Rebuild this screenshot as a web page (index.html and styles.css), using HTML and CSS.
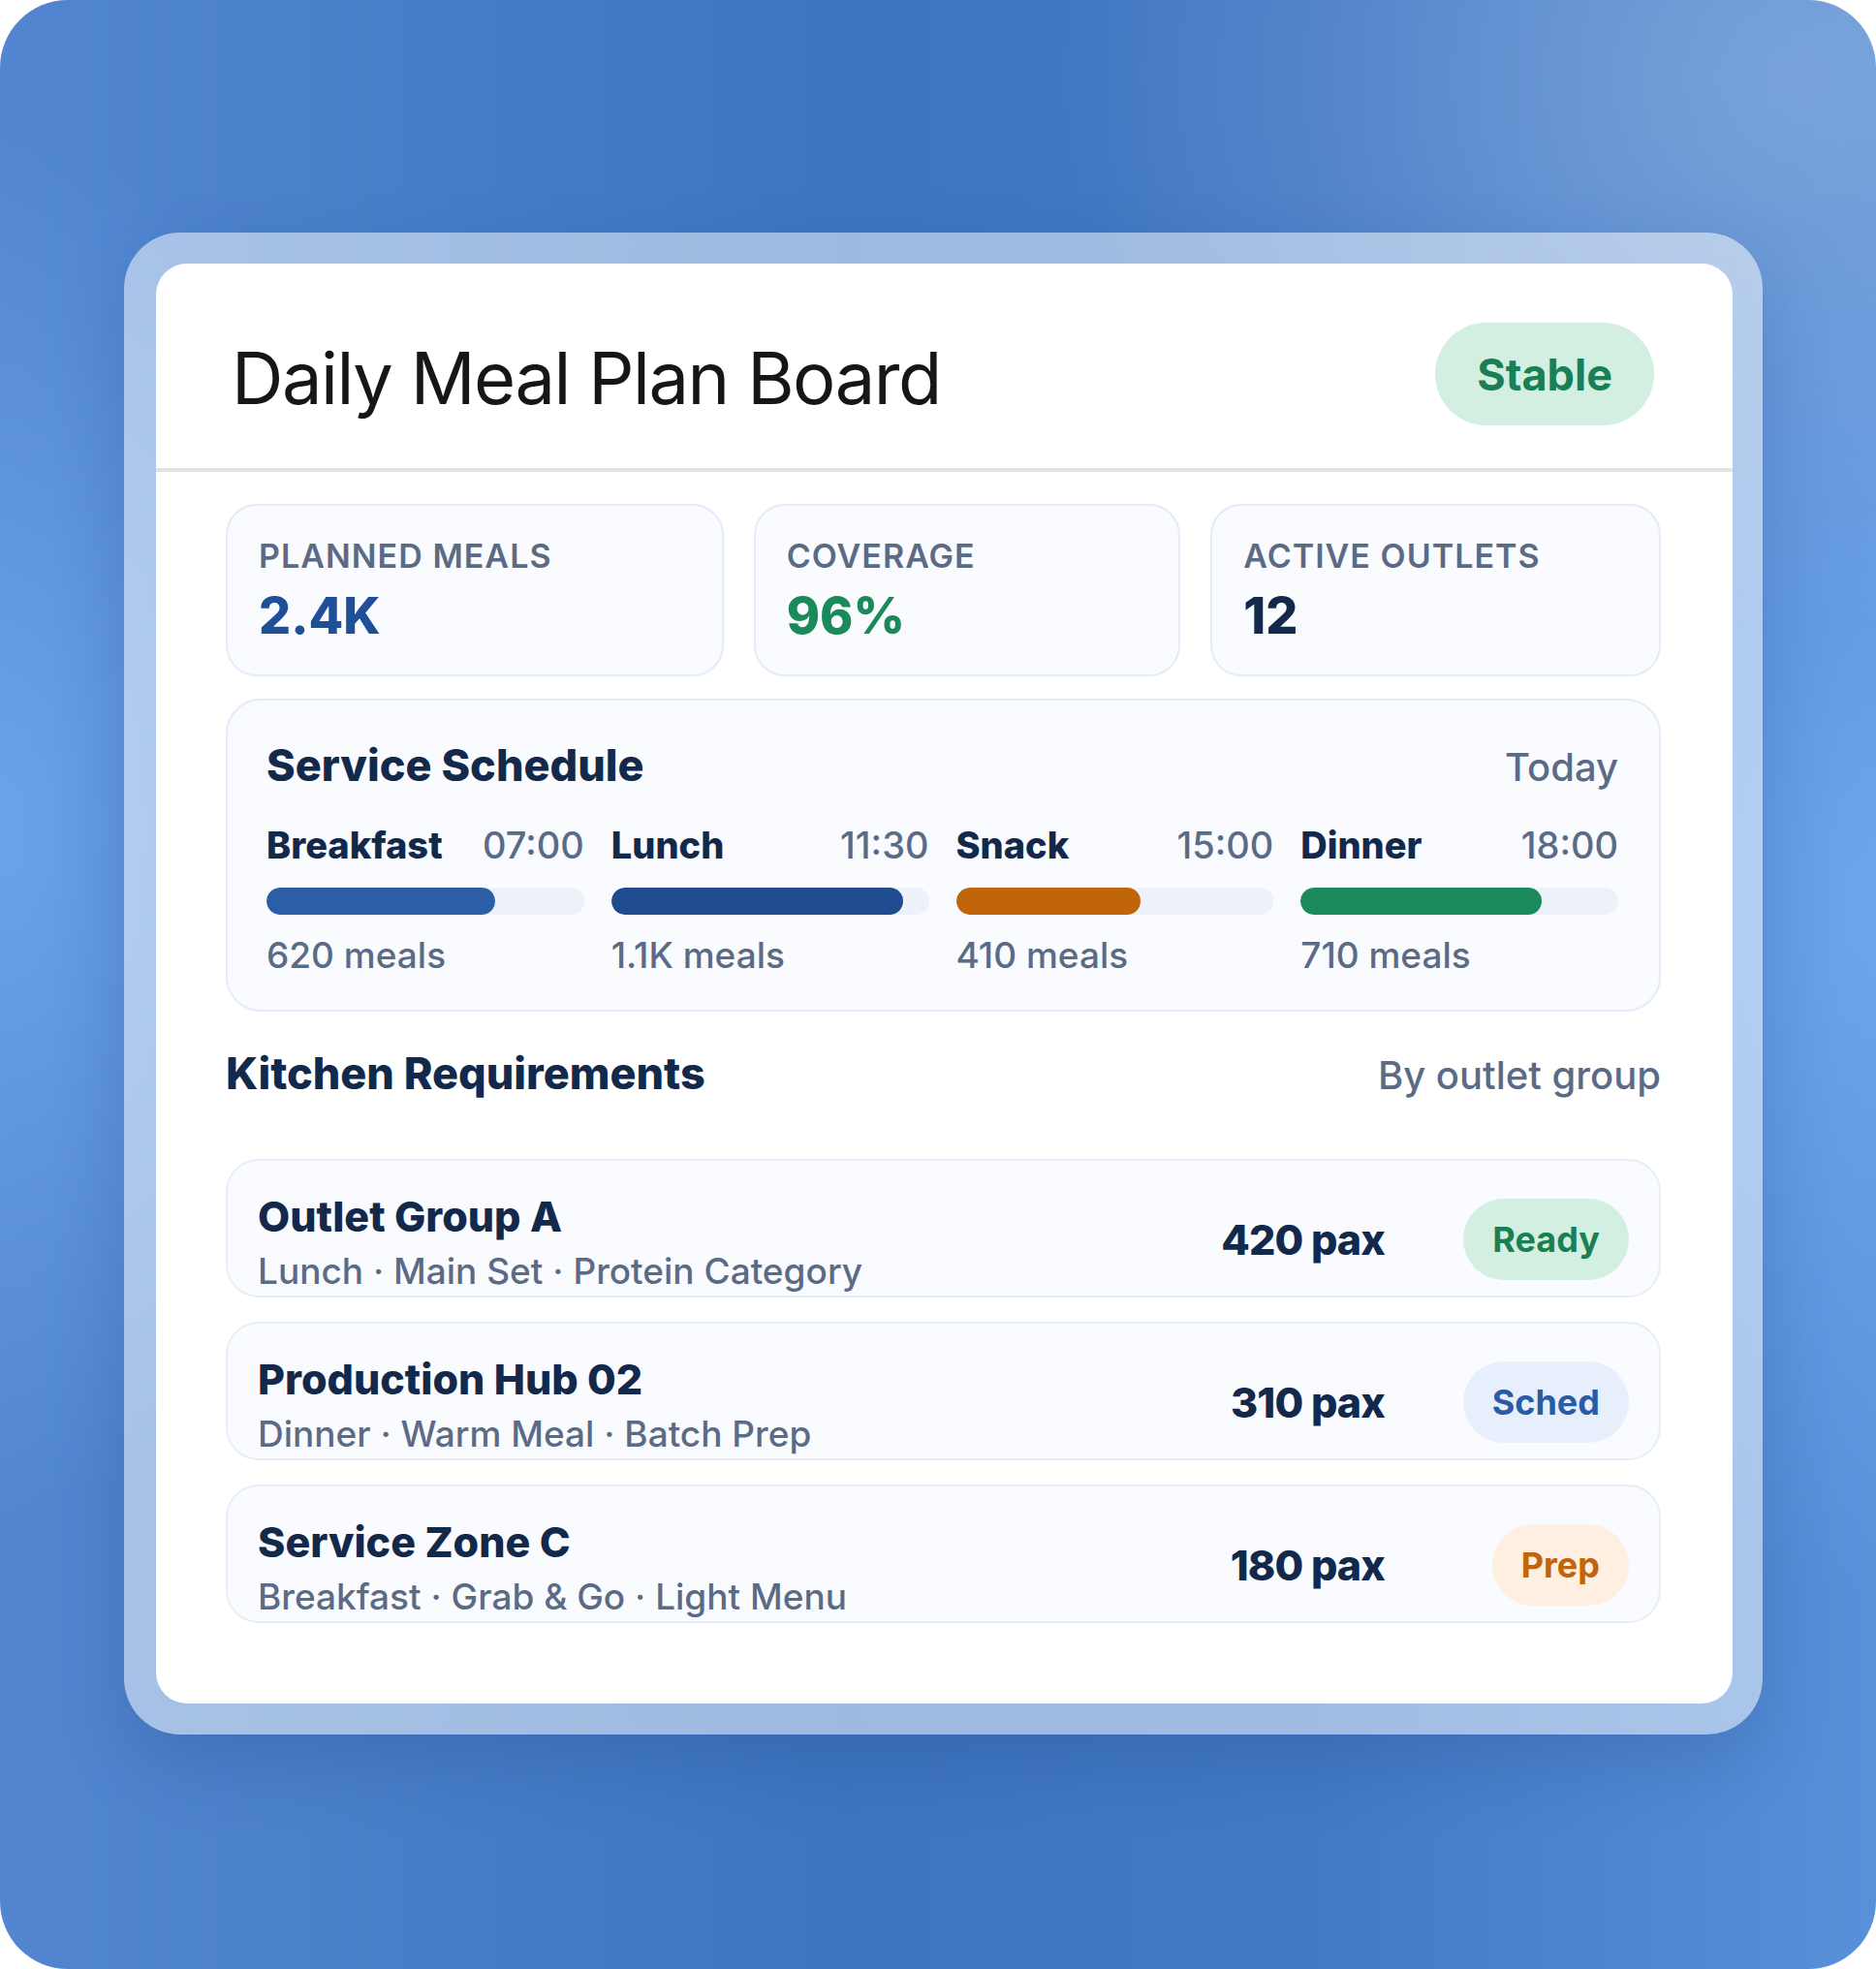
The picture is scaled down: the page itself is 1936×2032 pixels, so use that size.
FILE: index.html
```html
<!DOCTYPE html>
<html lang="en">
  <head>
    <meta charset="UTF-8" />
    <meta name="viewport" content="width=device-width, initial-scale=1.0" />
    <title>Daily Meal Plan Board</title>
    <link rel="stylesheet" href="styles.css">
  </head>
  <body>
    <div class="backdrop">
      <div class="frame">
        <main class="board">
          <header class="board-header">
            <h1>Daily Meal Plan Board</h1>
            <span class="pill pill-large pill-green">Stable</span>
          </header>

          <div class="board-body">
            <section class="stats">
              <div class="stat">
                <p class="stat-label">Planned Meals</p>
                <p class="stat-value text-blue">2.4K</p>
              </div>
              <div class="stat">
                <p class="stat-label">Coverage</p>
                <p class="stat-value text-green">96%</p>
              </div>
              <div class="stat">
                <p class="stat-label">Active Outlets</p>
                <p class="stat-value">12</p>
              </div>
            </section>

            <section class="schedule">
              <div class="section-head">
                <h2>Service Schedule</h2>
                <span class="muted">Today</span>
              </div>
              <div class="slots">
                <div class="slot">
                  <div class="slot-head"><strong>Breakfast</strong><span>07:00</span></div>
                  <div class="track"><div class="fill fill-blue" style="width: 72%"></div></div>
                  <p class="slot-count">620 meals</p>
                </div>
                <div class="slot">
                  <div class="slot-head"><strong>Lunch</strong><span>11:30</span></div>
                  <div class="track"><div class="fill fill-navy" style="width: 92%"></div></div>
                  <p class="slot-count">1.1K meals</p>
                </div>
                <div class="slot">
                  <div class="slot-head"><strong>Snack</strong><span>15:00</span></div>
                  <div class="track"><div class="fill fill-orange" style="width: 58%"></div></div>
                  <p class="slot-count">410 meals</p>
                </div>
                <div class="slot">
                  <div class="slot-head"><strong>Dinner</strong><span>18:00</span></div>
                  <div class="track"><div class="fill fill-green" style="width: 76%"></div></div>
                  <p class="slot-count">710 meals</p>
                </div>
              </div>
            </section>

            <section class="kitchen">
              <div class="section-head">
                <h2>Kitchen Requirements</h2>
                <span class="muted">By outlet group</span>
              </div>
              <div class="req-list">
                <div class="req">
                  <div>
                    <h3 class="req-name">Outlet Group A</h3>
                    <p class="req-meta">Lunch · Main Set · Protein Category</p>
                  </div>
                  <span class="req-pax">420 pax</span>
                  <span class="pill pill-small pill-green">Ready</span>
                </div>
                <div class="req">
                  <div>
                    <h3 class="req-name">Production Hub 02</h3>
                    <p class="req-meta">Dinner · Warm Meal · Batch Prep</p>
                  </div>
                  <span class="req-pax">310 pax</span>
                  <span class="pill pill-small pill-blue">Sched</span>
                </div>
                <div class="req">
                  <div>
                    <h3 class="req-name">Service Zone C</h3>
                    <p class="req-meta">Breakfast · Grab &amp; Go · Light Menu</p>
                  </div>
                  <span class="req-pax">180 pax</span>
                  <span class="pill pill-small pill-orange">Prep</span>
                </div>
              </div>
            </section>
          </div>
        </main>
      </div>
    </div>
  </body>
</html>
```

FILE: styles.css
```css
body {
  margin: 0;
  padding: 0;
  background-color: #fff;
  font-family: Inter, "Noto Sans", sans-serif;
  color: #13294b;
}

p,
h1,
h2,
h3 {
  margin: 0;
}

.backdrop {
  box-sizing: border-box;
  width: 1936px;
  height: 2032px;
  padding: 240px 117px 0 128px;
  border-radius: 70px;
  background:
    radial-gradient(ellipse 40% 28% at 96% 4%, rgba(150, 180, 220, 0.55), transparent),
    radial-gradient(ellipse 22% 35% at 0% 42%, rgba(118, 175, 245, 0.7), transparent),
    radial-gradient(ellipse 22% 35% at 100% 46%, rgba(118, 175, 245, 0.7), transparent),
    linear-gradient(90deg, #5286d0 0%, #3e75c1 45%, #4379c5 70%, #5990da 100%);
}

.frame {
  padding: 32px 31px 32px 33px;
  border-radius: 58px;
  background-color: rgba(255, 255, 255, 0.5);
  box-shadow: 0 30px 70px rgba(25, 60, 125, 0.22);
}

.board {
  background-color: #fff;
  border-radius: 32px;
  padding-bottom: 83px;
  overflow: hidden;
}

.board-header {
  display: flex;
  justify-content: space-between;
  align-items: center;
  padding: 61px 81px 44px 78px;
  border-bottom: 4px solid #e2e3e5;
}

.board-header h1 {
  margin-top: 8px;
  font-size: 74px;
  font-weight: 400;
  line-height: 1.2;
  letter-spacing: -0.02em;
  color: #161616;
}

.pill {
  display: inline-flex;
  align-items: center;
  justify-content: center;
  border-radius: 999px;
  font-weight: 700;
  white-space: nowrap;
}

.pill-large {
  height: 106px;
  padding: 0 43px;
  font-size: 45px;
}

.pill-small {
  height: 84px;
  padding: 0 30px;
  font-size: 36px;
}

.pill-green {
  background-color: #d3efe2;
  color: #1a7f55;
}

.pill-blue {
  background-color: #e7effc;
  color: #2a5ca6;
}

.pill-orange {
  background-color: #feefe0;
  color: #c0640d;
}

.board-body {
  padding: 33px 74px 0 72px;
}

.stats {
  display: grid;
  grid-template-columns: 1.166fr 1fr 1.055fr;
  gap: 31px;
}

.stat {
  padding: 32px 32px 29px;
  border: 2px solid #e3ecf8;
  border-radius: 32px;
  background-color: #f9fbfe;
}

.stat-label {
  font-size: 34px;
  font-weight: 600;
  line-height: 1.2;
  letter-spacing: 0.03em;
  text-transform: uppercase;
  color: #5b6b86;
}

.stat-value {
  margin-top: 10px;
  font-size: 52px;
  font-weight: 800;
  line-height: 1.2;
  color: #13294b;
}

.text-blue {
  color: #1f4f96;
}

.text-green {
  color: #1b8a5a;
}

.section-head {
  display: flex;
  justify-content: space-between;
  align-items: baseline;
}

.section-head h2 {
  font-size: 45px;
  font-weight: 800;
  line-height: 1.2;
}

.muted {
  font-size: 40px;
  font-weight: 500;
  color: #5b6b86;
}

.schedule {
  margin-top: 23px;
  padding: 40px 42px 34px 40px;
  border: 2px solid #e3ecf8;
  border-radius: 36px;
  background-color: #f9fbfe;
}

.slots {
  display: grid;
  grid-template-columns: repeat(4, 1fr);
  gap: 28px;
  margin-top: 33px;
}

.slot-head {
  display: flex;
  justify-content: space-between;
  align-items: baseline;
  font-size: 38px;
  line-height: 1.2;
}

.slot-head strong {
  font-weight: 800;
}

.slot-head span {
  font-weight: 500;
  color: #5b6b86;
}

.track {
  height: 28px;
  margin-top: 20px;
  border-radius: 14px;
  background-color: #edf2fa;
  overflow: hidden;
}

.fill {
  height: 100%;
  border-radius: 14px;
}

.fill-blue {
  background-color: #2b5ea7;
}

.fill-navy {
  background-color: #1f4c8f;
}

.fill-orange {
  background-color: #c1650b;
}

.fill-green {
  background-color: #1b8a5c;
}

.slot-count {
  margin-top: 20px;
  font-size: 37px;
  font-weight: 500;
  line-height: 1.2;
  color: #5b6b86;
}

.kitchen {
  margin-top: 37px;
}

.req-list {
  display: flex;
  flex-direction: column;
  gap: 25px;
  margin-top: 61px;
}

.req {
  display: grid;
  grid-template-columns: 1fr auto 172px;
  column-gap: 80px;
  align-items: center;
  padding: 33px 31px 3px 31px;
  border: 2px solid #e6eef8;
  border-radius: 34px;
  background-color: #f9fbfe;
}

.req-name {
  font-size: 43px;
  font-weight: 800;
  line-height: 48px;
}

.req-meta {
  margin-top: 10px;
  font-size: 37px;
  font-weight: 500;
  line-height: 45px;
  color: #5b6b86;
}

.req-pax {
  justify-self: end;
  margin-bottom: 8px;
  font-size: 43px;
  font-weight: 800;
  letter-spacing: -0.02em;
}

.req .pill {
  justify-self: end;
  margin-bottom: 8px;
}
```
